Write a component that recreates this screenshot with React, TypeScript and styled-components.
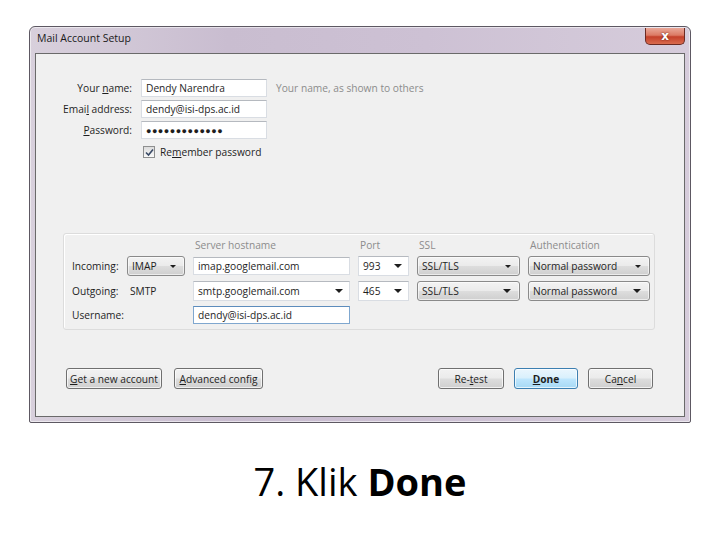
import styled, { createGlobalStyle, css } from "styled-components";

const GlobalStyle = createGlobalStyle`
  html, body {
    margin: 0;
    padding: 0;
    background: #ffffff;
  }
  body {
    font-family: "Open Sans", "Liberation Sans", sans-serif;
  }
`;

const UI_FONT = `"Open Sans", "Liberation Sans", sans-serif`;

const Page = styled.div`
  width: 720px;
  height: 540px;
  padding: 26px 0 0 29px;
  box-sizing: border-box;
`;

const Window = styled.div`
  width: 662px;
  height: 397px;
  box-sizing: border-box;
  display: flex;
  flex-direction: column;
  border: 1px solid #5d5862;
  border-radius: 6px 6px 2px 2px;
  padding: 0 5px 5px 5px;
  background: linear-gradient(
    90deg,
    #d8d0dc 0%,
    #c9bdd0 30%,
    #cdc1d4 60%,
    #d6ccdb 100%
  );
  box-shadow: inset 0 0 0 1px rgba(255, 255, 255, 0.55);
`;

const TitleBar = styled.div`
  height: 26px;
  display: flex;
  align-items: flex-start;
  justify-content: space-between;
`;

const Title = styled.div`
  font-family: ${UI_FONT};
  font-size: 10.5px;
  color: #1a1a1a;
  padding: 4px 0 0 2px;
`;

const CloseButton = styled.div`
  width: 40px;
  height: 17px;
  margin-top: 1px;
  box-sizing: border-box;
  border: 1px solid #6b2a22;
  border-top: none;
  border-radius: 0 0 5px 5px;
  background: linear-gradient(
    180deg,
    #e9a899 0%,
    #dc7a64 45%,
    #c4402a 55%,
    #d96b4e 100%
  );
  display: flex;
  align-items: center;
  justify-content: center;
  color: #ffffff;
  font-family: "DejaVu Sans", sans-serif;
  font-weight: 700;
  font-size: 12px;
  text-shadow: 0 0 2px #5a1a10;
`;

const Client = styled.div`
  flex: 1;
  background: #f0f0f0;
  border: 1px solid #6a6a6a;
  display: flex;
  flex-direction: column;
  font-family: ${UI_FONT};
  font-size: 10.2px;
  color: #1e1e1e;
`;

const TopForm = styled.div`
  margin-top: 25px;
  display: grid;
  grid-template-columns: 96px 126px auto;
  column-gap: 9px;
  row-gap: 3px;
  align-items: center;
`;

const Label = styled.label`
  text-align: right;
  white-space: nowrap;
  line-height: 18px;
`;

const Hint = styled.span`
  color: #8c8c8c;
  white-space: nowrap;
`;

const TextBox = styled.div<{ $focused?: boolean }>`
  height: 18px;
  box-sizing: border-box;
  background: #ffffff;
  border: 1px solid #d9dde3;
  border-top-color: #b5b9bf;
  padding: 0 4px;
  line-height: 16px;
  white-space: nowrap;
  overflow: hidden;
  ${(p) =>
    p.$focused &&
    css`
      border-color: #7fa7cf;
      border-top-color: #5d8cbc;
    `}
`;

const Dots = styled.span`
  font-size: 9px;
  letter-spacing: 0.5px;
`;

const CheckRow = styled.div`
  grid-column: 2 / 4;
  display: flex;
  align-items: center;
  gap: 5px;
  margin-top: 3px;
  padding-left: 2px;
`;

const CheckBox = styled.div`
  width: 12px;
  height: 12px;
  box-sizing: border-box;
  border: 1px solid #8e8f8f;
  background: linear-gradient(180deg, #dcdcdc, #fafafa);
  display: flex;
  align-items: center;
  justify-content: center;
`;

const GroupBox = styled.div`
  margin: 74px 29px 0 27px;
  height: 97px;
  box-sizing: border-box;
  border: 1px solid #dcdcdc;
  border-radius: 3px;
  box-shadow: inset 1px 1px 0 #ffffff;
  padding: 4px 0 0 8px;
  display: grid;
  grid-template-columns: 47px 58px 157px 51px 103px 122px;
  grid-template-rows: 13px 20px 20px 18px;
  column-gap: 8px;
  row-gap: 5px;
  align-items: center;
`;

const ColHead = styled.div`
  color: #8c8c8c;
  white-space: nowrap;
  padding-left: 2px;
`;

const RowLabel = styled.div<{ $indent?: number }>`
  white-space: nowrap;
  padding-left: ${(p) => p.$indent ?? 0}px;
`;

const DropButton = styled.div`
  height: 20px;
  box-sizing: border-box;
  border: 1px solid #8a8a8a;
  border-radius: 3px;
  background: linear-gradient(180deg, #f3f3f3 0%, #ebebeb 48%, #dddddd 52%, #cfcfcf 100%);
  box-shadow: inset 0 0 0 1px rgba(255, 255, 255, 0.6);
  display: flex;
  align-items: center;
  justify-content: space-between;
  padding: 0 8px 0 4px;
  white-space: nowrap;
`;

const ComboBox = styled.div`
  height: 20px;
  box-sizing: border-box;
  background: #ffffff;
  border: 1px solid #d9dde3;
  border-top-color: #b5b9bf;
  display: flex;
  align-items: center;
  justify-content: space-between;
  padding: 0 6px 0 4px;
  white-space: nowrap;
`;

const Arrow = styled.span<{ $small?: boolean }>`
  width: 0;
  height: 0;
  border-left: ${(p) => (p.$small ? 3 : 4)}px solid transparent;
  border-right: ${(p) => (p.$small ? 3 : 4)}px solid transparent;
  border-top: ${(p) => (p.$small ? 3 : 4)}px solid #1e1e1e;
`;

const ButtonRow = styled.div`
  margin-top: 38px;
  padding: 0 31px 0 30px;
  display: flex;
  align-items: center;
`;

const Spacer = styled.div`
  flex: 1;
`;

const Button = styled.div<{ $w: number; $primary?: boolean; $gap?: number }>`
  width: ${(p) => p.$w}px;
  height: 21px;
  margin-left: ${(p) => p.$gap ?? 0}px;
  box-sizing: border-box;
  border: 1px solid #707070;
  border-radius: 3px;
  background: linear-gradient(180deg, #f2f2f2 0%, #ebebeb 48%, #dddddd 52%, #cfcfcf 100%);
  box-shadow: inset 0 0 0 1px rgba(255, 255, 255, 0.7);
  display: flex;
  align-items: center;
  justify-content: center;
  white-space: nowrap;
  ${(p) =>
    p.$primary &&
    css`
      border-color: #3c7fb1;
      background: linear-gradient(180deg, #eaf6fd 0%, #d9f0fc 48%, #bee6fd 52%, #a7d9f5 100%);
      font-weight: 700;
    `}
`;

const Caption = styled.div`
  margin-top: 36px;
  width: 662px;
  text-align: center;
  font-family: "Open Sans", "Liberation Sans", sans-serif;
  font-size: 38px;
  color: #000000;
  line-height: 44px;
`;

const Bold = styled.b`
  font-weight: 700;
`;

export default function App() {
  return (
    <>
      <GlobalStyle />
      <Page>
        <Window>
          <TitleBar>
            <Title>Mail Account Setup</Title>
            <CloseButton>x</CloseButton>
          </TitleBar>
          <Client>
            <TopForm>
              <Label>
                Your <u>n</u>ame:
              </Label>
              <TextBox>Dendy Narendra</TextBox>
              <Hint>Your name, as shown to others</Hint>

              <Label>
                Emai<u>l</u> address:
              </Label>
              <TextBox>dendy@isi-dps.ac.id</TextBox>
              <span />

              <Label>
                <u>P</u>assword:
              </Label>
              <TextBox>
                <Dots>●●●●●●●●●●●●●</Dots>
              </TextBox>
              <span />

              <CheckRow>
                <CheckBox>
                  <svg width="9" height="9" viewBox="0 0 9 9">
                    <path
                      d="M1 4.5 L3.5 7 L8 1.5"
                      fill="none"
                      stroke="#3a4a66"
                      strokeWidth="1.6"
                    />
                  </svg>
                </CheckBox>
                <span>
                  Re<u>m</u>ember password
                </span>
              </CheckRow>
            </TopForm>

            <GroupBox>
              <span />
              <span />
              <ColHead>Server hostname</ColHead>
              <ColHead>Port</ColHead>
              <ColHead>SSL</ColHead>
              <ColHead>Authentication</ColHead>

              <RowLabel>Incoming:</RowLabel>
              <DropButton>
                IMAP <Arrow $small />
              </DropButton>
              <TextBox>imap.googlemail.com</TextBox>
              <ComboBox>
                993 <Arrow />
              </ComboBox>
              <DropButton>
                SSL/TLS <Arrow $small />
              </DropButton>
              <DropButton>
                Normal password <Arrow $small />
              </DropButton>

              <RowLabel>Outgoing:</RowLabel>
              <RowLabel $indent={3}>SMTP</RowLabel>
              <ComboBox>
                smtp.googlemail.com <Arrow />
              </ComboBox>
              <ComboBox>
                465 <Arrow />
              </ComboBox>
              <DropButton>
                SSL/TLS <Arrow />
              </DropButton>
              <DropButton>
                Normal password <Arrow />
              </DropButton>

              <RowLabel>Username:</RowLabel>
              <span />
              <TextBox $focused>dendy@isi-dps.ac.id</TextBox>
            </GroupBox>

            <ButtonRow>
              <Button $w={96}>
                <u>G</u>et a new account
              </Button>
              <Button $w={89} $gap={12}>
                <u>A</u>dvanced config
              </Button>
              <Spacer />
              <Button $w={66}>
                Re-<u>t</u>est
              </Button>
              <Button $w={64} $gap={10} $primary>
                <u>D</u>one
              </Button>
              <Button $w={65} $gap={10}>
                Ca<u>n</u>cel
              </Button>
            </ButtonRow>
          </Client>
        </Window>
        <Caption>
          7. Klik <Bold>Done</Bold>
        </Caption>
      </Page>
    </>
  );
}
